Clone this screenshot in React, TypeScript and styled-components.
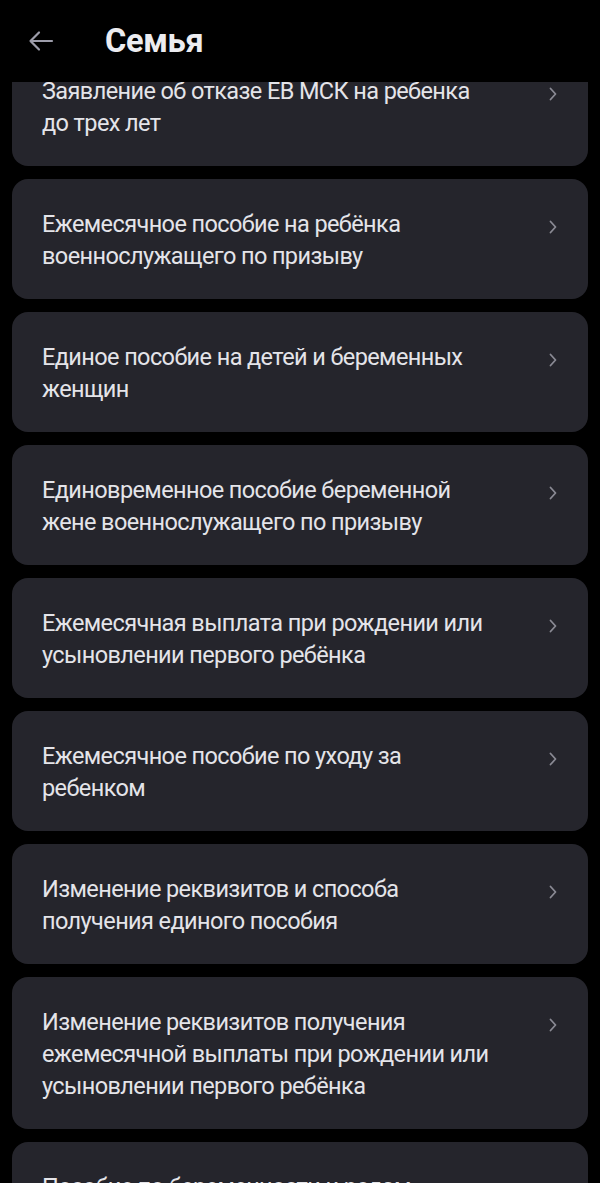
import React from "react";
import styled, { createGlobalStyle } from "styled-components";

const GlobalStyle = createGlobalStyle`
  html, body {
    margin: 0;
    padding: 0;
    background: #000;
  }
  body {
    font-family: Roboto, "Noto Sans", "Liberation Sans", sans-serif;
    -webkit-font-smoothing: antialiased;
  }
`;

const Screen = styled.div`
  width: 600px;
  height: 1183px;
  background: #000;
  display: flex;
  flex-direction: column;
  overflow: hidden;
`;

const Header = styled.header`
  height: 82px;
  flex-shrink: 0;
  display: flex;
  align-items: center;
  padding: 0 0 0 27px;
  gap: 50px;
  background: #000;
  position: relative;
  z-index: 1;
`;

const BackButton = styled.button`
  border: 0;
  background: none;
  padding: 0;
  width: 28px;
  height: 28px;
  display: flex;
  align-items: center;
  justify-content: center;
  color: #9d9daa;
`;

const Title = styled.h1`
  margin: 0;
  font-size: 32.5px;
  font-weight: 700;
  color: #ececf0;
  letter-spacing: -0.3px;
`;

const Scroll = styled.div`
  flex: 1;
  overflow: hidden;
`;

const List = styled.div`
  margin-top: -36px;
  padding: 0 12px;
  display: flex;
  flex-direction: column;
  gap: 13px;
`;

const Card = styled.div`
  background: #25252c;
  border-radius: 16px;
  padding: 29px 30px 27px;
  display: flex;
  align-items: flex-start;
  justify-content: space-between;
  gap: 20px;
`;

const CardText = styled.div`
  font-size: 23.5px;
  line-height: 32px;
  letter-spacing: -0.6px;
  color: #e4e4e9;
  max-width: 470px;
`;

const Chevron = styled.span`
  flex-shrink: 0;
  width: 16px;
  height: 32px;
  display: flex;
  align-items: center;
  justify-content: center;
  color: #8a8a94;
  margin-top: 3px;
  margin-right: -3px;
`;

const items: string[][] = [
  ["Заявление об отказе ЕВ МСК на ребенка", "до трех лет"],
  ["Ежемесячное пособие на ребёнка", "военнослужащего по призыву"],
  ["Единое пособие на детей и беременных", "женщин"],
  ["Единовременное пособие беременной", "жене военнослужащего по призыву"],
  ["Ежемесячная выплата при рождении или", "усыновлении первого ребёнка"],
  ["Ежемесячное пособие по уходу за", "ребенком"],
  ["Изменение реквизитов и способа", "получения единого пособия"],
  [
    "Изменение реквизитов получения",
    "ежемесячной выплаты при рождении или",
    "усыновлении первого ребёнка",
  ],
  ["Пособие по беременности и родам", "\u00a0"],
];

function ArrowLeftIcon() {
  return (
    <svg width="28" height="28" viewBox="0 0 28 28" fill="none">
      <path
        d="M25 14H3.5M12 5.5L3.5 14l8.5 8.5"
        stroke="currentColor"
        strokeWidth="2.2"
        strokeLinecap="round"
        strokeLinejoin="round"
      />
    </svg>
  );
}

function ChevronIcon() {
  return (
    <svg width="10" height="16" viewBox="0 0 10 16" fill="none">
      <path
        d="M2.5 2.5L7.5 8l-5 5.5"
        stroke="currentColor"
        strokeWidth="1.8"
        strokeLinecap="round"
        strokeLinejoin="round"
      />
    </svg>
  );
}

export default function App() {
  return (
    <>
      <GlobalStyle />
      <Screen>
        <Header>
          <BackButton aria-label="Назад">
            <ArrowLeftIcon />
          </BackButton>
          <Title>Семья</Title>
        </Header>
        <Scroll>
          <List>
            {items.map((lines, i) => (
              <Card key={i}>
                <CardText>
                  {lines.map((l, j) => (
                    <div key={j}>{l}</div>
                  ))}
                </CardText>
                <Chevron>
                  <ChevronIcon />
                </Chevron>
              </Card>
            ))}
          </List>
        </Scroll>
      </Screen>
    </>
  );
}
